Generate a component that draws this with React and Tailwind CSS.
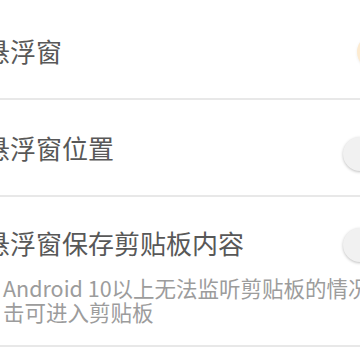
import React from "react";

function Thumb({ on }) {
  return (
    <div className="relative h-[34px] w-[34px] shrink-0">
      {on ? (
        <div className="h-[34px] w-[34px] rounded-full bg-[#fdebd0] shadow-[0_1px_3px_rgba(0,0,0,0.08)]" />
      ) : (
        <div className="h-[34px] w-[34px] rounded-full bg-[#f1f1f1] shadow-[0_1px_3px_rgba(0,0,0,0.25)]" />
      )}
    </div>
  );
}

export default function App() {
  return (
    <div className="relative h-[360px] w-[360px] overflow-hidden bg-white font-['Noto_Sans_CJK_SC',sans-serif]">
      <div className="w-[360px]">
        <div className="flex h-[98px] items-center pt-[4px]">
          <div className="ml-[-16px] whitespace-nowrap text-[26px] leading-[30px] text-[#585858]">悬浮窗</div>
        </div>
        <div className="h-[2px] bg-[#e8e8e8]" />
        <div className="flex h-[95px] items-center">
          <div className="ml-[-16px] whitespace-nowrap text-[26px] leading-[30px] text-[#585858]">悬浮窗位置</div>
        </div>
        <div className="h-[2px] bg-[#e8e8e8]" />
        <div className="flex h-[148px] flex-col pt-[31px]">
          <div className="ml-[-16px] whitespace-nowrap text-[26px] leading-[30px] text-[#585858]">悬浮窗保存剪贴板内容</div>
          <div className="mt-[18px] whitespace-nowrap pl-[3px] text-[21.5px] leading-[24px] text-[#9c9c9c]">
            <div>Android 10以上无法监听剪贴板的情况下，点</div>
            <div>击可进入剪贴板</div>
          </div>
        </div>
        <div className="h-[2px] bg-[#e8e8e8]" />
      </div>
      <div className="absolute left-[357px] top-[35px]">
        <Thumb on />
      </div>
      <div className="absolute left-[343px] top-[137px]">
        <Thumb />
      </div>
      <div className="absolute left-[343px] top-[228px]">
        <Thumb />
      </div>
    </div>
  );
}
